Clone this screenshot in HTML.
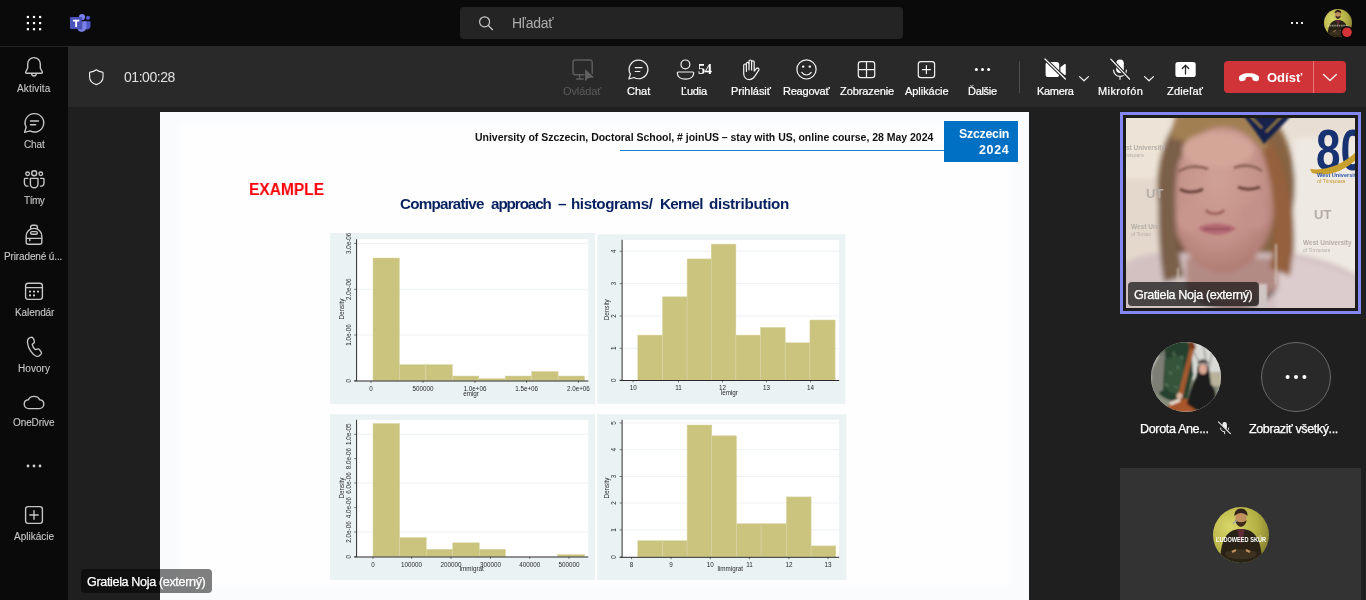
<!DOCTYPE html>
<html lang="sk">
<head>
<meta charset="utf-8">
<title>Microsoft Teams</title>
<style>
*{box-sizing:border-box;margin:0;padding:0}
html,body{width:1366px;height:600px;overflow:hidden;background:#1f1f1f;font-family:"Liberation Sans",sans-serif;}
.abs{position:absolute}
#topbar{left:0;top:0;width:1366px;height:46px;background:#0a0a0a}
#rail{left:0;top:46px;width:68px;height:554px;background:#0a0a0a;border-top:1px solid #222}
#toolbar{left:68px;top:46px;width:1298px;height:61px;background:#292929}
#stage{left:68px;top:107px;width:1298px;height:493px;background:#1f1f1f}
#search{left:460px;top:7px;width:443px;height:32px;background:#242424;border-radius:4px}
.t{position:absolute;white-space:nowrap;line-height:1;transform-origin:0 0;will-change:transform}
.rl{color:#cfcfcf;font-size:10px;text-align:center;width:68px;left:0}
.tl{color:#fff;font-size:11px;text-align:center;width:80px}
#slide{left:160px;top:112px;width:869px;height:488px;background:#f9fbfd;overflow:hidden}
#icons{left:0;top:0;width:1366px;height:600px;pointer-events:none}
</style>
</head>
<body>
<div id="topbar" class="abs"></div>
<div id="rail" class="abs"></div>
<div id="toolbar" class="abs"></div>
<div id="stage" class="abs"></div>
<div id="search" class="abs"></div>
<div class="t" id="s_txt" style="letter-spacing:-0.25px;left:512px;top:16px;font-size:14px;color:#adadad">Hľadať</div>

<!-- labels -->
<div class="t" style="left:562.8px;top:86px;font-size:11px;color:#5c5c5c;letter-spacing:-0.114px">Ovládať</div>
<div class="t" style="left:626.6px;top:86px;font-size:11px;color:#fff;-webkit-text-stroke:0.22px #fff;letter-spacing:0.017px">Chat</div>
<div class="t" style="left:681.3px;top:86px;font-size:11px;color:#fff;-webkit-text-stroke:0.22px #fff;letter-spacing:-0.205px">Ľudia</div>
<div class="t" style="left:730.8px;top:86px;font-size:11px;color:#fff;-webkit-text-stroke:0.22px #fff;letter-spacing:-0.038px">Prihlásiť</div>
<div class="t" style="left:783.2px;top:86px;font-size:11px;color:#fff;-webkit-text-stroke:0.22px #fff;letter-spacing:-0.225px">Reagovať</div>
<div class="t" style="left:839.5px;top:86px;font-size:11px;color:#fff;-webkit-text-stroke:0.22px #fff;letter-spacing:-0.094px">Zobrazenie</div>
<div class="t" style="left:904.8px;top:86px;font-size:11px;color:#fff;-webkit-text-stroke:0.22px #fff;letter-spacing:-0.054px">Aplikácie</div>
<div class="t" style="left:968.3px;top:86px;font-size:11px;color:#fff;-webkit-text-stroke:0.22px #fff;letter-spacing:-0.296px">Ďalšie</div>
<div class="t" style="left:1037.2px;top:86px;font-size:11px;color:#fff;-webkit-text-stroke:0.22px #fff;letter-spacing:-0.326px">Kamera</div>
<div class="t" style="left:1098.1px;top:86px;font-size:11px;color:#fff;-webkit-text-stroke:0.22px #fff;letter-spacing:0.387px">Mikrofón</div>
<div class="t" style="left:1167.3px;top:86px;font-size:11px;color:#fff;-webkit-text-stroke:0.22px #fff;letter-spacing:0.19px">Zdieľať</div>
<div class="t" style="left:17.1px;top:84px;font-size:10px;color:#c8c8c8;-webkit-text-stroke:0.1px #c8c8c8;letter-spacing:0.152px">Aktivita</div>
<div class="t" style="left:23.6px;top:140px;font-size:10px;color:#c8c8c8;-webkit-text-stroke:0.1px #c8c8c8;letter-spacing:-0.108px">Chat</div>
<div class="t" style="left:23.6px;top:196px;font-size:10px;color:#c8c8c8;-webkit-text-stroke:0.1px #c8c8c8;letter-spacing:-0.473px">Tímy</div>
<div class="t" style="left:4.0px;top:252px;font-size:10px;color:#c8c8c8;-webkit-text-stroke:0.1px #c8c8c8;letter-spacing:-0.127px">Priradené ú...</div>
<div class="t" style="left:14.6px;top:308px;font-size:10px;color:#c8c8c8;-webkit-text-stroke:0.1px #c8c8c8;letter-spacing:-0.09px">Kalendár</div>
<div class="t" style="left:18.0px;top:364px;font-size:10px;color:#c8c8c8;-webkit-text-stroke:0.1px #c8c8c8;letter-spacing:0.062px">Hovory</div>
<div class="t" style="left:13.2px;top:418px;font-size:10px;color:#c8c8c8;-webkit-text-stroke:0.1px #c8c8c8;letter-spacing:-0.093px">OneDrive</div>
<div class="t" style="left:14.0px;top:532px;font-size:10px;color:#c8c8c8;-webkit-text-stroke:0.1px #c8c8c8;letter-spacing:-0.004px">Aplikácie</div>

<!-- toolbar -->
<div class="t" id="timer" style="left:124px;top:70px;font-size:14px;color:#e0e0e0;letter-spacing:-0.45px">01:00:28</div>
<div class="t" style="left:698.400px;top:61.900px;font-size:14.400px;letter-spacing:-0.500px;font-weight:bold;color:#fff;font-family:'Liberation Serif',serif">54</div>
<div class="abs" style="left:1019px;top:61px;width:1px;height:32px;background:#4d4d4d"></div>
<div class="abs" id="leave" style="left:1224px;top:61px;width:122px;height:32px;background:#d13438;border-radius:4px"></div>
<div class="abs" style="left:1313px;top:61px;width:1px;height:32px;background:#e6787b"></div>
<div class="t" id="odist" style="left:1266.5px;top:70.6px;font-size:13px;font-weight:bold;color:#fff">Odísť</div>

<!-- slide -->
<div id="slide" class="abs">
<div class="abs" style="left:22px;top:16px;width:825px;height:455px;background:#fefefe;box-shadow:0 0 6px 3px #fefefe"></div>
</div>

<!-- right panel -->
<div class="abs" style="left:620px;top:149.500px;width:324px;height:1.200px;background:#1b7fd0"></div>
<div class="abs" style="left:943.500px;top:120.800px;width:74.500px;height:40.800px;background:#0070c4"></div>
<div class="t" id="hdr" style="letter-spacing:-0.023px;left:475.400px;top:131.600px;font-size:10.500px;font-weight:bold;color:#111">University of Szczecin, Doctoral School, # joinUS – stay with US, online course, 28 May 2024</div>
<div class="t" id="szc" style="letter-spacing:-0.28px;left:959px;top:127.600px;font-size:12.400px;font-weight:bold;color:#fff">Szczecin</div>
<div class="t" id="y24" style="letter-spacing:0.7px;left:979px;top:143.800px;font-size:12.400px;font-weight:bold;color:#fff">2024</div>
<div class="t" id="ex" style="transform:scaleX(0.893);left:249.300px;top:181px;font-size:17.400px;font-weight:bold;color:#fb0007">EXAMPLE</div>
<div class="t" style="left:399.6px;top:195.9px;font-size:15.2px;font-weight:bold;color:#07205f;letter-spacing:-0.752px">Comparative</div>
<div class="t" style="left:491.1px;top:195.9px;font-size:15.2px;font-weight:bold;color:#07205f;letter-spacing:-1.066px">approach</div>
<div class="t" style="left:558.4px;top:195.9px;font-size:15.2px;font-weight:bold;color:#07205f">–</div>
<div class="t" style="left:571.3px;top:195.9px;font-size:15.2px;font-weight:bold;color:#07205f;letter-spacing:-0.419px">histograms/</div>
<div class="t" style="left:659.9px;top:195.9px;font-size:15.2px;font-weight:bold;color:#07205f;letter-spacing:-0.756px">Kernel</div>
<div class="t" style="left:709.4px;top:195.9px;font-size:15.2px;font-weight:bold;color:#07205f;letter-spacing:-0.285px">distribution</div>
<svg class="abs" id="plots" style="left:0;top:0;width:1366px;height:600px" viewBox="0 0 1366 600" font-family="Liberation Sans, sans-serif" font-size="6.3" fill="#2a2a2a">
<g filter="url(#pb)">
<rect x="330" y="233" width="265.2" height="171.2" fill="#eaf2f3"/>
<rect x="356.3" y="239.2" width="232.0" height="141.5" fill="#fff"/>
<path d="M356.3 335H588.3" stroke="#e9eef0" stroke-width="0.8"/>
<path d="M356.3 289.3H588.3" stroke="#e9eef0" stroke-width="0.8"/>
<path d="M356.3 243.4H588.3" stroke="#e9eef0" stroke-width="0.8"/>
<rect x="373.0" y="258.0" width="26.4" height="122.7" fill="#cac47f" stroke="#d9d5a3" stroke-width="0.5"/>
<rect x="399.4" y="364.7" width="26.4" height="16.0" fill="#cac47f" stroke="#d9d5a3" stroke-width="0.5"/>
<rect x="425.9" y="364.7" width="26.5" height="16.0" fill="#cac47f" stroke="#d9d5a3" stroke-width="0.5"/>
<rect x="452.4" y="376.0" width="26.4" height="4.7" fill="#cac47f" stroke="#d9d5a3" stroke-width="0.5"/>
<rect x="478.8" y="378.6" width="26.4" height="2.1" fill="#cac47f" stroke="#d9d5a3" stroke-width="0.5"/>
<rect x="505.2" y="376.0" width="26.5" height="4.7" fill="#cac47f" stroke="#d9d5a3" stroke-width="0.5"/>
<rect x="531.7" y="371.5" width="26.4" height="9.2" fill="#cac47f" stroke="#d9d5a3" stroke-width="0.5"/>
<rect x="558.1" y="376.0" width="26.5" height="4.7" fill="#cac47f" stroke="#d9d5a3" stroke-width="0.5"/>
<path d="M356.6 239.2V381.0M354.3 381.0H588.3" stroke="#2b2b2b" stroke-width="1" fill="none"/>
<path d="M371 380.7v2.2" stroke="#2b2b2b" stroke-width="0.6"/>
<text x="371" y="390.6" text-anchor="middle">0</text>
<path d="M423 380.7v2.2" stroke="#2b2b2b" stroke-width="0.6"/>
<text x="423" y="390.6" text-anchor="middle">500000</text>
<path d="M475 380.7v2.2" stroke="#2b2b2b" stroke-width="0.6"/>
<text x="475" y="390.6" text-anchor="middle">1.0e+06</text>
<path d="M526.6 380.7v2.2" stroke="#2b2b2b" stroke-width="0.6"/>
<text x="526.6" y="390.6" text-anchor="middle">1.5e+06</text>
<path d="M578.4 380.7v2.2" stroke="#2b2b2b" stroke-width="0.6"/>
<text x="578.4" y="390.6" text-anchor="middle">2.0e+06</text>
<text x="471" y="395.6" text-anchor="middle">emigr</text>
<path d="M356.3 380.7h-2.2" stroke="#2b2b2b" stroke-width="0.6"/>
<text transform="translate(350.5,380.7) rotate(-90)" text-anchor="middle">0</text>
<path d="M356.3 335h-2.2" stroke="#2b2b2b" stroke-width="0.6"/>
<text transform="translate(350.5,335) rotate(-90)" text-anchor="middle">1.0e-06</text>
<path d="M356.3 289.3h-2.2" stroke="#2b2b2b" stroke-width="0.6"/>
<text transform="translate(350.5,289.3) rotate(-90)" text-anchor="middle">2.0e-06</text>
<path d="M356.3 243.4h-2.2" stroke="#2b2b2b" stroke-width="0.6"/>
<text transform="translate(350.5,243.4) rotate(-90)" text-anchor="middle">3.0e-06</text>
<text transform="translate(343.5,309) rotate(-90)" text-anchor="middle">Density</text>
<rect x="597.2" y="234.3" width="248.1" height="169.5" fill="#eaf2f3"/>
<rect x="621.8" y="239.8" width="217.4" height="140.4" fill="#fff"/>
<path d="M621.8 348.3H839.2" stroke="#e9eef0" stroke-width="0.8"/>
<path d="M621.8 316H839.2" stroke="#e9eef0" stroke-width="0.8"/>
<path d="M621.8 283.6H839.2" stroke="#e9eef0" stroke-width="0.8"/>
<path d="M621.8 251.2H839.2" stroke="#e9eef0" stroke-width="0.8"/>
<rect x="637.8" y="335.1" width="24.7" height="45.1" fill="#cac47f" stroke="#d9d5a3" stroke-width="0.5"/>
<rect x="662.5" y="296.8" width="24.6" height="83.4" fill="#cac47f" stroke="#d9d5a3" stroke-width="0.5"/>
<rect x="687.1" y="258.9" width="24.1" height="121.3" fill="#cac47f" stroke="#d9d5a3" stroke-width="0.5"/>
<rect x="711.2" y="244.1" width="24.7" height="136.1" fill="#cac47f" stroke="#d9d5a3" stroke-width="0.5"/>
<rect x="735.9" y="335.1" width="24.6" height="45.1" fill="#cac47f" stroke="#d9d5a3" stroke-width="0.5"/>
<rect x="760.5" y="327.4" width="24.7" height="52.8" fill="#cac47f" stroke="#d9d5a3" stroke-width="0.5"/>
<rect x="785.2" y="342.8" width="24.7" height="37.4" fill="#cac47f" stroke="#d9d5a3" stroke-width="0.5"/>
<rect x="809.9" y="320.0" width="25.2" height="60.2" fill="#cac47f" stroke="#d9d5a3" stroke-width="0.5"/>
<path d="M622.0999999999999 239.8V380.5M619.8 380.5H839.2" stroke="#2b2b2b" stroke-width="1" fill="none"/>
<path d="M633.2 380.2v2.2" stroke="#2b2b2b" stroke-width="0.6"/>
<text x="633.2" y="390.1" text-anchor="middle">10</text>
<path d="M678.5 380.2v2.2" stroke="#2b2b2b" stroke-width="0.6"/>
<text x="678.5" y="390.1" text-anchor="middle">11</text>
<path d="M722.6 380.2v2.2" stroke="#2b2b2b" stroke-width="0.6"/>
<text x="722.6" y="390.1" text-anchor="middle">12</text>
<path d="M766.4 380.2v2.2" stroke="#2b2b2b" stroke-width="0.6"/>
<text x="766.4" y="390.1" text-anchor="middle">13</text>
<path d="M810.5 380.2v2.2" stroke="#2b2b2b" stroke-width="0.6"/>
<text x="810.5" y="390.1" text-anchor="middle">14</text>
<text x="729.4" y="395" text-anchor="middle">lemigr</text>
<path d="M621.8 380.2h-2.2" stroke="#2b2b2b" stroke-width="0.6"/>
<text transform="translate(616,380.2) rotate(-90)" text-anchor="middle">0</text>
<path d="M621.8 348.3h-2.2" stroke="#2b2b2b" stroke-width="0.6"/>
<text transform="translate(616,348.3) rotate(-90)" text-anchor="middle">1</text>
<path d="M621.8 316h-2.2" stroke="#2b2b2b" stroke-width="0.6"/>
<text transform="translate(616,316) rotate(-90)" text-anchor="middle">2</text>
<path d="M621.8 283.6h-2.2" stroke="#2b2b2b" stroke-width="0.6"/>
<text transform="translate(616,283.6) rotate(-90)" text-anchor="middle">3</text>
<path d="M621.8 251.2h-2.2" stroke="#2b2b2b" stroke-width="0.6"/>
<text transform="translate(616,251.2) rotate(-90)" text-anchor="middle">4</text>
<text transform="translate(609,309.8) rotate(-90)" text-anchor="middle">Density</text>
<rect x="330" y="414.3" width="265.2" height="165.8" fill="#eaf2f3"/>
<rect x="356.3" y="419.8" width="232.0" height="136.9" fill="#fff"/>
<path d="M356.3 434.3H588.3" stroke="#e9eef0" stroke-width="0.8"/>
<path d="M356.3 483H588.3" stroke="#e9eef0" stroke-width="0.8"/>
<path d="M356.3 532H588.3" stroke="#e9eef0" stroke-width="0.8"/>
<rect x="373.0" y="423.5" width="26.7" height="133.2" fill="#cac47f" stroke="#d9d5a3" stroke-width="0.5"/>
<rect x="399.7" y="537.6" width="26.6" height="19.1" fill="#cac47f" stroke="#d9d5a3" stroke-width="0.5"/>
<rect x="426.3" y="549.3" width="26.5" height="7.4" fill="#cac47f" stroke="#d9d5a3" stroke-width="0.5"/>
<rect x="452.8" y="542.8" width="26.5" height="13.9" fill="#cac47f" stroke="#d9d5a3" stroke-width="0.5"/>
<rect x="479.3" y="549.3" width="26.2" height="7.4" fill="#cac47f" stroke="#d9d5a3" stroke-width="0.5"/>
<rect x="557.4" y="554.6" width="27.2" height="2.1" fill="#cac47f" stroke="#d9d5a3" stroke-width="0.5"/>
<path d="M356.6 419.8V557.0M354.3 557.0H588.3" stroke="#2b2b2b" stroke-width="1" fill="none"/>
<path d="M373 556.7v2.2" stroke="#2b2b2b" stroke-width="0.6"/>
<text x="373" y="566.6" text-anchor="middle">0</text>
<path d="M411.6 556.7v2.2" stroke="#2b2b2b" stroke-width="0.6"/>
<text x="411.6" y="566.6" text-anchor="middle">100000</text>
<path d="M451 556.7v2.2" stroke="#2b2b2b" stroke-width="0.6"/>
<text x="451" y="566.6" text-anchor="middle">200000</text>
<path d="M490.5 556.7v2.2" stroke="#2b2b2b" stroke-width="0.6"/>
<text x="490.5" y="566.6" text-anchor="middle">300000</text>
<path d="M529.7 556.7v2.2" stroke="#2b2b2b" stroke-width="0.6"/>
<text x="529.7" y="566.6" text-anchor="middle">400000</text>
<path d="M569 556.7v2.2" stroke="#2b2b2b" stroke-width="0.6"/>
<text x="569" y="566.6" text-anchor="middle">500000</text>
<text x="471.7" y="571.4" text-anchor="middle">immigrat</text>
<path d="M356.3 556.7h-2.2" stroke="#2b2b2b" stroke-width="0.6"/>
<text transform="translate(350.5,556.7) rotate(-90)" text-anchor="middle">0</text>
<path d="M356.3 532h-2.2" stroke="#2b2b2b" stroke-width="0.6"/>
<text transform="translate(350.5,532) rotate(-90)" text-anchor="middle">2.0e-06</text>
<path d="M356.3 507.6h-2.2" stroke="#2b2b2b" stroke-width="0.6"/>
<text transform="translate(350.5,507.6) rotate(-90)" text-anchor="middle">4.0e-06</text>
<path d="M356.3 483h-2.2" stroke="#2b2b2b" stroke-width="0.6"/>
<text transform="translate(350.5,483) rotate(-90)" text-anchor="middle">6.0e-06</text>
<path d="M356.3 458.6h-2.2" stroke="#2b2b2b" stroke-width="0.6"/>
<text transform="translate(350.5,458.6) rotate(-90)" text-anchor="middle">8.0e-06</text>
<path d="M356.3 434.3h-2.2" stroke="#2b2b2b" stroke-width="0.6"/>
<text transform="translate(350.5,434.3) rotate(-90)" text-anchor="middle">1.0e-05</text>
<text transform="translate(343.5,488) rotate(-90)" text-anchor="middle">Density</text>
<rect x="597.2" y="414.3" width="249.4" height="165.8" fill="#eaf2f3"/>
<rect x="621.8" y="419.8" width="217.4" height="137.2" fill="#fff"/>
<path d="M621.8 529.9H839.2" stroke="#e9eef0" stroke-width="0.8"/>
<path d="M621.8 503H839.2" stroke="#e9eef0" stroke-width="0.8"/>
<path d="M621.8 476.5H839.2" stroke="#e9eef0" stroke-width="0.8"/>
<path d="M621.8 449.7H839.2" stroke="#e9eef0" stroke-width="0.8"/>
<path d="M621.8 422.9H839.2" stroke="#e9eef0" stroke-width="0.8"/>
<rect x="637.8" y="540.7" width="24.7" height="16.3" fill="#cac47f" stroke="#d9d5a3" stroke-width="0.5"/>
<rect x="662.5" y="540.7" width="24.6" height="16.3" fill="#cac47f" stroke="#d9d5a3" stroke-width="0.5"/>
<rect x="687.1" y="425.0" width="24.7" height="132.0" fill="#cac47f" stroke="#d9d5a3" stroke-width="0.5"/>
<rect x="711.8" y="435.8" width="24.7" height="121.2" fill="#cac47f" stroke="#d9d5a3" stroke-width="0.5"/>
<rect x="736.5" y="523.7" width="24.6" height="33.3" fill="#cac47f" stroke="#d9d5a3" stroke-width="0.5"/>
<rect x="761.1" y="523.7" width="25.3" height="33.3" fill="#cac47f" stroke="#d9d5a3" stroke-width="0.5"/>
<rect x="786.4" y="496.9" width="24.7" height="60.1" fill="#cac47f" stroke="#d9d5a3" stroke-width="0.5"/>
<rect x="811.1" y="545.9" width="24.7" height="11.1" fill="#cac47f" stroke="#d9d5a3" stroke-width="0.5"/>
<path d="M622.0999999999999 419.8V557.3M619.8 557.3H839.2" stroke="#2b2b2b" stroke-width="1" fill="none"/>
<path d="M631.6 557v2.2" stroke="#2b2b2b" stroke-width="0.6"/>
<text x="631.6" y="566.9" text-anchor="middle">8</text>
<path d="M671.1 557v2.2" stroke="#2b2b2b" stroke-width="0.6"/>
<text x="671.1" y="566.9" text-anchor="middle">9</text>
<path d="M710.3 557v2.2" stroke="#2b2b2b" stroke-width="0.6"/>
<text x="710.3" y="566.9" text-anchor="middle">10</text>
<path d="M749.4 557v2.2" stroke="#2b2b2b" stroke-width="0.6"/>
<text x="749.4" y="566.9" text-anchor="middle">11</text>
<path d="M788.9 557v2.2" stroke="#2b2b2b" stroke-width="0.6"/>
<text x="788.9" y="566.9" text-anchor="middle">12</text>
<path d="M828 557v2.2" stroke="#2b2b2b" stroke-width="0.6"/>
<text x="828" y="566.9" text-anchor="middle">13</text>
<text x="730.3" y="571.4" text-anchor="middle">limmigrat</text>
<path d="M621.8 557h-2.2" stroke="#2b2b2b" stroke-width="0.6"/>
<text transform="translate(616,557) rotate(-90)" text-anchor="middle">0</text>
<path d="M621.8 529.9h-2.2" stroke="#2b2b2b" stroke-width="0.6"/>
<text transform="translate(616,529.9) rotate(-90)" text-anchor="middle">1</text>
<path d="M621.8 503h-2.2" stroke="#2b2b2b" stroke-width="0.6"/>
<text transform="translate(616,503) rotate(-90)" text-anchor="middle">2</text>
<path d="M621.8 476.5h-2.2" stroke="#2b2b2b" stroke-width="0.6"/>
<text transform="translate(616,476.5) rotate(-90)" text-anchor="middle">3</text>
<path d="M621.8 449.7h-2.2" stroke="#2b2b2b" stroke-width="0.6"/>
<text transform="translate(616,449.7) rotate(-90)" text-anchor="middle">4</text>
<path d="M621.8 422.9h-2.2" stroke="#2b2b2b" stroke-width="0.6"/>
<text transform="translate(616,422.9) rotate(-90)" text-anchor="middle">5</text>
<text transform="translate(609,488) rotate(-90)" text-anchor="middle">Density</text>
</g>
<defs><filter id="pb" x="0" y="0" width="100%" height="100%"><feGaussianBlur stdDeviation="0.35"/></filter></defs>
</svg>
<!-- video tile -->
<div class="abs" style="left:1120px;top:112px;width:241px;height:202px;background:#1c1c1c;border:3px solid #8287f4"></div>
<svg class="abs" style="left:1126px;top:118px;width:229px;height:190px" viewBox="0 0 229 190">
<defs>
<filter id="vb" x="-10%" y="-10%" width="120%" height="120%"><feGaussianBlur stdDeviation="2.600"/></filter>
<filter id="vb2" x="-10%" y="-10%" width="120%" height="120%"><feGaussianBlur stdDeviation="1.100"/></filter>
<filter id="vb3" x="-20%" y="-20%" width="140%" height="140%"><feGaussianBlur stdDeviation="0.600"/></filter>
<clipPath id="vc"><rect width="229" height="190"/></clipPath>
<radialGradient id="fg" cx="0.45" cy="0.35" r="0.75"><stop offset="0" stop-color="#d0a196"/><stop offset="0.600" stop-color="#c29088"/><stop offset="1" stop-color="#a67268"/></radialGradient>
</defs>
<g clip-path="url(#vc)">
<rect width="229" height="190" fill="#e8ded3"/>
<g filter="url(#vb)">
<rect x="168" y="20" width="70" height="150" fill="#efe9e3"/>
<rect x="-5" y="-5" width="48" height="70" fill="#ede4d7"/>
<rect x="-5" y="60" width="40" height="90" fill="#e4d8cc"/>
<!-- ribbon -->
<!-- hair back -->
<ellipse cx="100" cy="68" rx="69" ry="94" fill="#866443"/>
<path d="M50 -4c30-6 70-4 84 8l10 30H40z" fill="#a27f52"/>
<path d="M44 20c-10 30-12 80-2 138l20-4c-8-40-10-90-2-130z" fill="#6f5039"/>
<path d="M150 30c16 30 22 80 16 128l-22-4c6-40 4-86-6-120z" fill="#7f5e3e"/>
<!-- clothes -->
<path d="M-5 195v-46c10-10 26-14 46-14h110c30 0 56 8 84 24v36z" fill="#d3c1c2"/>
<path d="M150 140c30 0 56 8 84 24v30h-84z" fill="#dccccd"/>
<path d="M60 140h92v30c-10 14-30 22-46 22s-36-8-46-22z" fill="#b38b85"/><path d="M64 172c10 12 26 18 42 18s32-6 42-18" stroke="#7f6c6b" stroke-width="5" fill="none"/>
<!-- face -->
<ellipse cx="97" cy="82" rx="52" ry="73" fill="url(#fg)"/>
<ellipse cx="92" cy="32" rx="36" ry="18" fill="#d3a698"/>
<ellipse cx="66" cy="100" rx="15" ry="14" fill="#c9968d"/>
<ellipse cx="128" cy="98" rx="14" ry="14" fill="#c4908a"/>
<!-- hair front sides -->
<path d="M44 18c-12 30-16 90-6 146l20-6c-10-40-12-90-2-132z" fill="#7a5e48"/>
<path d="M146 24c18 30 26 86 18 134l-20-8c8-40 4-84-8-116z" fill="#94603c"/>
</g>
<g filter="url(#vb2)">
<path d="M52 54c8-6 20-7 30-3M108 50c8-4 20-3 28 3" stroke="#8c6354" stroke-width="2.600" fill="none"/>
<path d="M54 71c6 4 16 4 23 0M112 69c6 3 15 3 22 0" stroke="#6d443c" stroke-width="2.800" fill="none"/>
<path d="M80 92c4 5 14 5 18 0" stroke="#a2695f" stroke-width="3.200" fill="none"/>
<path d="M72 110c8-6 28-6 38 0-8 9-30 9-38 0z" fill="#b56c74"/>
<path d="M78 111h26" stroke="#8a4a52" stroke-width="1.600"/>
<path d="M52 150v26M150 126v40" stroke="#cfc4b6" stroke-width="1.600"/>
<path d="M117 -3h49l-28 29-9-13z" fill="#15244c"/><path d="M124 -2l12 12M156 -2l-16 16" stroke="#b9962f" stroke-width="1.300"/>
<rect x="132" y="166" width="9" height="24" fill="#cfc6c4"/>
</g>
<!-- 80 logo -->
<g filter="url(#vb3)">
<text x="190" y="51.500" font-family="Liberation Sans, sans-serif" font-weight="bold" font-size="58" fill="#17306f" textLength="49" lengthAdjust="spacingAndGlyphs">80</text>
<path d="M184 51c16 2 32-4 46-17v8c-14 12-28 17-44 13z" fill="#c7a02e"/>
<text x="191" y="59" font-family="Liberation Sans, sans-serif" font-weight="bold" font-size="5.600" fill="#2a56a8">West University</text>
<text x="191" y="64.500" font-family="Liberation Sans, sans-serif" font-size="5.200" fill="#c39a2c">of Timișoara</text>
<g fill="#b5aea7" font-family="Liberation Sans, sans-serif" font-weight="bold">
<text x="0" y="32" font-size="6.500">st University</text><text x="0" y="39" font-size="5" font-weight="normal">mișoara</text>
<text x="20" y="80" font-size="13">UT</text>
<text x="5" y="111" font-size="6.500">West Uni</text><text x="5" y="118" font-size="5" font-weight="normal">of Timișo</text>
<text x="188" y="101" font-size="13">UT</text>
<text x="177" y="127" font-size="6.500">West University</text><text x="177" y="134" font-size="5" font-weight="normal">of Timișoara</text>
</g>
</g>
</g>
</svg>
<div class="abs" style="left:1128px;top:282px;width:131px;height:24px;background:rgba(20,20,20,0.720);border-radius:4px"></div>
<div class="t" id="vname" style="-webkit-text-stroke:0.25px #fff;left:1133.500px;top:289px;font-size:12.600px;color:#fff;letter-spacing:-0.360px">Gratiela Noja (externý)</div>

<!-- Dorota avatar -->
<svg class="abs" style="left:1151px;top:342px;width:70px;height:70px" viewBox="0 0 70 70">
<defs><clipPath id="dc"><circle cx="35" cy="35" r="35"/></clipPath><filter id="db" x="-10%" y="-10%" width="120%" height="120%"><feGaussianBlur stdDeviation="1.300"/></filter></defs>
<g clip-path="url(#dc)">
<rect width="70" height="70" fill="#cfcfca"/>
<g filter="url(#db)">
<rect x="0" y="38" width="70" height="32" fill="#868c78"/><rect x="56" y="30" width="14" height="14" fill="#b9b39c"/>
<rect x="40" y="0" width="30" height="30" fill="#d9d9d6"/>
<path d="M40 4l10 20M52 0l4 26M62 6l-4 20" stroke="#9a9a94" stroke-width="1.500"/>
<path d="M8 8c6-10 26-12 32-6l2 30-6 26c-10 4-22 0-28-6z" fill="#27402d"/>
<path d="M14 20c4-6 14-8 18-4l2 20-6 16c-6 0-12-2-14-8z" fill="#35543b"/><path d="M12 14l3 3M22 10l2 4M18 30l3 2M26 24l2 3M14 42l3 2M24 44l2 2M30 14l2 3" stroke="#5d7d5f" stroke-width="1.600"/>
<path d="M0 30c4-10 8-18 14-22l-2 40-10 6z" fill="#7d7f74"/>
<!-- instrument -->
<path d="M40 2l4 2-12 50-5-1z" fill="#a55a2e"/>
<path d="M38 0c4-2 8 2 6 8l-6-2z" fill="#7a3a1c"/>
<path d="M16 66c4-8 14-12 24-8l6 12H16z" fill="#a8542b"/>
<path d="M19 62l10-4" stroke="#e8dccf" stroke-width="3"/>
<!-- person -->
<path d="M46 26c2-6 10-6 12 0l2 16c4 4 6 10 4 18l-16 10-12-8c2-12 6-22 10-28z" fill="#1f1f1f"/>
<ellipse cx="52" cy="27" rx="4.200" ry="5.200" fill="#dba794"/>
<path d="M46 22c2-6 10-6 12 0-4-2-8-2-12 0z" fill="#2a1d18"/>
<circle cx="28.500" cy="54" r="3" fill="#e2b8a2"/>
</g>
</g>
</svg>
<div class="t" id="dname" style="-webkit-text-stroke:0.25px #fff;left:1139.500px;top:423.100px;font-size:12.600px;color:#fff;letter-spacing:-0.380px">Dorota Ane...</div>
<div class="t" id="zname" style="-webkit-text-stroke:0.25px #fff;left:1249px;top:423.100px;font-size:12.600px;color:#fff;letter-spacing:-0.420px">Zobraziť všetký...</div>
<div class="abs" style="left:1261px;top:342px;width:70px;height:70px;border-radius:50%;background:#292929;border:1px solid #6a6a6a"></div>

<!-- bottom-right tile -->
<div class="abs" style="left:1120px;top:468px;width:241px;height:132px;background:#333333"></div>
<svg class="abs" style="left:1213px;top:507px;width:56px;height:56px" viewBox="0 0 56 56">
<defs><clipPath id="lc"><circle cx="28" cy="28" r="28"/></clipPath><filter id="lb" x="-10%" y="-10%" width="120%" height="120%"><feGaussianBlur stdDeviation="0.700"/></filter>
<radialGradient id="lg" cx="0.300" cy="0.350" r="0.900"><stop offset="0" stop-color="#d8d66a"/><stop offset="0.550" stop-color="#b5b044"/><stop offset="1" stop-color="#6f6a28"/></radialGradient>
<g id="lud"><rect width="56" height="56" fill="url(#lg)"/>
<g filter="url(#lb)">
<path d="M7 58c0-20 4-36 21-36s21 16 21 36z" fill="#2a2418"/>
<path d="M24 22l4 16 4-16z" fill="#5e2c36"/>
<ellipse cx="28" cy="11" rx="5.600" ry="7.500" fill="#c2905e"/>
<path d="M21.500 9c-1-10 14-10 13 0-4-4-9-4-13 0z" fill="#33241a"/>
<path d="M22.400 13c1 9 10 9 11.200 0-3 3-8 3-11.200 0z" fill="#3c2a1c"/>
<path d="M24 13.500l-4 3" stroke="#9aa0a8" stroke-width="1.400"/>
<path d="M12 46c8-5 24-5 32 0l-2 4c-8 3-20 3-28 0z" fill="#3d3322"/>
<path d="M19 45l4-2M37 45l-4-2" stroke="#c2905e" stroke-width="2"/>
</g></g></defs>
<g clip-path="url(#lc)"><use href="#lud"/>
<text x="28" y="34.500" text-anchor="middle" font-family="Liberation Sans, sans-serif" font-weight="bold" font-size="6.400" fill="#fff" textLength="50" lengthAdjust="spacingAndGlyphs">ĽUDOWEED SKÚR</text>
</g>
</svg>
<!-- top-right avatar -->
<svg class="abs" style="left:1324px;top:8.700px;width:30px;height:30px" viewBox="0 0 60 60">
<defs><clipPath id="lc2"><circle cx="28" cy="28" r="28"/></clipPath></defs>
<g clip-path="url(#lc2)"><use href="#lud"/><path d="M7 33h42" stroke="#e8e8e0" stroke-width="3.500" stroke-dasharray="3 1.500" opacity="0.550"/></g>
<circle cx="46" cy="46.500" r="12.500" fill="#0a0a0a"/><circle cx="46" cy="46.500" r="9.600" fill="#d33438"/>
</svg>

<!-- bottom-left name label -->
<div class="abs" style="left:81px;top:569px;width:131px;height:24px;background:rgba(0,0,0,0.500);border-radius:4px"></div>
<div class="t" id="bname" style="-webkit-text-stroke:0.25px #fff;left:86.800px;top:576.200px;font-size:12.600px;color:#fff;letter-spacing:-0.360px">Gratiela Noja (externý)</div>


<svg id="icons" class="abs" viewBox="0 0 1366 600">
<!-- waffle -->
<g fill="#fff">
<rect x="26.8" y="15.9" width="2.2" height="2.2"/><rect x="32.9" y="15.9" width="2.2" height="2.2"/><rect x="39" y="15.9" width="2.2" height="2.2"/>
<rect x="26.8" y="22" width="2.2" height="2.2"/><rect x="32.9" y="22" width="2.2" height="2.2"/><rect x="39" y="22" width="2.2" height="2.2"/>
<rect x="26.8" y="28.1" width="2.2" height="2.2"/><rect x="32.9" y="28.1" width="2.2" height="2.2"/><rect x="39" y="28.1" width="2.2" height="2.2"/>
</g>
<!-- teams logo -->
<g>
<circle cx="88" cy="17.800" r="2.100" fill="#5059c9"/>
<path d="M84.800 21.200h4.800c.5 0 .9.400.9.900v4c0 1.900-1.500 3.400-3.300 3.400s-3.300-1.500-3.300-3.400z" fill="#5059c9"/>
<circle cx="82" cy="17" r="3.100" fill="#7b83eb"/>
<path d="M77 21.200h8.500c.5 0 .9.400.9.900v5.200c0 2.500-2.100 4.500-4.700 4.500s-4.700-2-4.700-4.500z" fill="#7b83eb"/>
<rect x="70.400" y="17.400" width="12" height="12.200" rx="1.100" fill="#0a0a0a" opacity="0.350"/>
<rect x="70" y="17" width="11.800" height="12" rx="1.100" fill="#4b53bc"/>
<path d="M73 19.800h6.300v1.700h-2.200v5.600h-1.900v-5.600H73z" fill="#fff"/>
</g>
<!-- search -->
<g fill="none" stroke="#c8c8c8" stroke-width="1.2" stroke-linecap="round">
<circle cx="484.6" cy="21.800" r="5"/><path d="M488.300 25.500l4.300 4.200"/>
</g>
<!-- top right dots -->
<g fill="#e8e8e8"><rect x="1291" y="22" width="2" height="2"/><rect x="1296" y="22" width="2" height="2"/><rect x="1301" y="22" width="2" height="2"/></g>

<!-- RAIL ICONS -->
<g fill="none" stroke="#c6c6c6" stroke-width="1.380" stroke-linecap="round" stroke-linejoin="round">
<!-- bell -->
<path d="M34 57.600c-3.700 0-6.300 2.800-6.300 6.300v4.100l-2 4c-.3.600.1 1.300.8 1.300h15c.7 0 1.100-.7.800-1.300l-2-4v-4.100c0-3.500-2.600-6.300-6.300-6.300z"/>
<path d="M31.600 73.600a2.400 2.400 0 0 0 4.800 0"/>
<!-- chat -->
<path d="M34.500 113.600a9.200 9.200 0 1 1-4.500 17.200l-5.400 1.500 1.600-5.100A9.200 9.200 0 0 1 34.500 113.600z"/>
<path d="M30.500 121h8M30.500 124.800h5.200"/>
<!-- teams -->
<circle cx="34.200" cy="173.300" r="2.500"/><circle cx="27.600" cy="173.800" r="1.800"/><circle cx="40.800" cy="173.800" r="1.800"/>
<path d="M30.400 178.400h7.600v5.600a3.800 3.800 0 0 1-7.600 0z"/>
<path d="M27.800 178.400h-2.600c-.5 0-.8.300-.8.800v3.800c0 2 1.700 3.400 3.600 3.100"/>
<path d="M40.600 178.400h2.600c.5 0 .8.300.8.800v3.800c0 2-1.700 3.400-3.600 3.100"/>
<!-- backpack -->
<path d="M30.600 228.600v-1.200c0-1.200 1-2.100 2.100-2.100h2.600c1.200 0 2.100.9 2.100 2.100v1.200"/>
<path d="M26.200 236.200c0-4.400 3.200-7.800 7.800-7.800s7.800 3.400 7.800 7.800v6c0 1.100-.9 2-2 2h-11.600c-1.100 0-2-.9-2-2z"/>
<rect x="30.600" y="231.600" width="6.800" height="2.600" rx="1.300"/>
<path d="M26.400 238.400h15.200M29.800 238.600v2.200"/>
<!-- calendar -->
<rect x="25.600" y="283.200" width="16.800" height="16.200" rx="2.600"/>
<path d="M25.800 287.600h16.400"/>
<!-- phone -->
<path transform="translate(34 337) scale(0.97 0.93) translate(-34 -337)" d="M29.300 337.900l1.600-.5c1-.3 2 .2 2.400 1.200l1 2.500c.4.900.1 1.900-.600 2.500l-1.500 1.300c.2 1.600 1.700 4.300 3.300 5.700l1.800-.6c.9-.3 1.900 0 2.500.8l1.500 2.100c.6.900.5 2-.2 2.800l-1 1c-1 1-2.500 1.400-3.800 1-3.600-1.200-8.100-8.200-8.800-13.200-.5-2.900.3-5.700 1.800-6.600z"/>
<!-- cloud -->
<path d="M29 408.600c-2.800 0-4.800-2-4.800-4.400 0-2.300 1.800-4.200 4.200-4.400.7-2.100 2.900-3.400 5.600-3.400s4.900 1.300 5.600 3.400c2.400.2 4.200 2.100 4.200 4.400 0 2.400-2 4.400-4.800 4.400z"/>
<!-- apps -->
<rect x="25.600" y="506.600" width="16.800" height="16.800" rx="2.600"/>
<path d="M34 510.800v8.400M29.800 515h8.400"/>
</g>
<g fill="#cfcfcf">
<circle cx="30" cy="291.600" r="1.100"/><circle cx="34" cy="291.600" r="1.100"/><circle cx="38" cy="291.600" r="1.100"/>
<circle cx="30" cy="295.400" r="1.100"/><circle cx="34" cy="295.400" r="1.100"/>
<circle cx="28" cy="466" r="1.400"/><circle cx="34" cy="466" r="1.400"/><circle cx="40" cy="466" r="1.400"/>
</g>
<!-- shield -->
<path transform="translate(96.2 77) scale(0.93 0.97) translate(-96.2 -77)" d="M96.300 69.600c1.900 1.400 4.200 2.200 6.500 2.400.4 0 .7.300.7.700v4.500c0 3.600-2.500 6.100-7.200 7.700-4.700-1.600-7.200-4.100-7.200-7.700v-4.500c0-.4.300-.7.700-.700 2.300-.2 4.600-1 6.500-2.400z" fill="none" stroke="#f0f0f0" stroke-width="1.200" stroke-linejoin="round"/>

<!-- Ovladat (disabled) -->
<g fill="none" stroke="#5c5c5c" stroke-width="1.500" stroke-linecap="round" stroke-linejoin="round">
<path d="M584 74.800h-8.600a2.400 2.400 0 0 1-2.400-2.400v-10a2.400 2.400 0 0 1 2.400-2.400h14.400a2.400 2.400 0 0 1 2.400 2.400v11.200"/>
<path d="M579.600 75.200v3.600M576.600 79h6.600"/>
</g>
<path d="M585.100 69.200v12.100l3.300-3.300 5.700-.600z" fill="#616161"/>

<g fill="none" stroke="#f0f0f0" stroke-width="1.220" stroke-linecap="round" stroke-linejoin="round">
<!-- chat -->
<path d="M638.500 60.100a9.300 9.300 0 1 1-4.500 17.400l-5.100 1.500 1.500-4.900A9.300 9.300 0 0 1 638.500 60.100z"/>
<path d="M635.200 67.600h6.800M635.200 71.500h4.600"/>
<!-- people -->
<circle cx="685.400" cy="64.400" r="4.400"/>
<path d="M678.200 72h14.600c.5 0 .9.400.9.900 0 3.700-3.400 6.200-8.200 6.200s-8.200-2.500-8.200-6.200c0-.5.400-.9.900-.9z"/>
<!-- hand -->
<path d="M746.400 71.500v-7.800c0-.8.600-1.400 1.300-1.400s1.300.6 1.300 1.400v-2.300c0-.8.600-1.400 1.300-1.400s1.300.6 1.300 1.400v.9c0-.8.600-1.400 1.300-1.400s1.300.6 1.300 1.400v8.800l2.100-2.400c.6-.7 1.600-.8 2.300-.3.500.4.600 1.100.2 1.700l-4.100 6.300c-1.200 1.900-2.600 3.200-5.200 3.200-3.400 0-5.800-2.500-5.800-6.100v-8.100c0-.8.600-1.400 1.300-1.400s1.400.6 1.400 1.400"/>
<path d="M749 63.700v6.200M751.600 62.300v7.600"/>
<!-- smiley -->
<circle cx="806.500" cy="69.400" r="9.600"/>
<path d="M801.800 72.400c1.100 1.700 2.700 2.600 4.700 2.600s3.600-.9 4.700-2.600"/>
<!-- grid -->
<rect x="858.300" y="61.700" width="16.400" height="15.900" rx="2.600"/>
<path d="M866.500 62v15.400M858.600 69.600h15.800"/>
<!-- apps -->
<rect x="918.300" y="61.700" width="16.300" height="15.900" rx="2.600"/>
<path d="M926.400 65.600v8M922.400 69.600h8"/>
<!-- chevrons -->
<path d="M1079.500 76.600l4.500 4.200 4.500-4.200M1144.500 76.600l4.500 4.200 4.500-4.200"/>
<path d="M1323.600 74.600l6.400 6 6.400-6" stroke-width="1.400"/>
<!-- mic arc+stem -->
<path d="M1113.600 70.200c0 3.600 2.800 6.100 6.400 6.100s6.400-2.500 6.400-6.100M1120 76.500v2.800" stroke-width="1.200"/>
</g>
<g fill="#fff">
<circle cx="803.200" cy="66.600" r="1.200"/><circle cx="809.800" cy="66.600" r="1.200"/>
<circle cx="976.400" cy="69.500" r="1.500"/><circle cx="982.500" cy="69.500" r="1.500"/><circle cx="988.600" cy="69.500" r="1.500"/>
<!-- camera -->
<rect x="1045.600" y="62" width="13.600" height="15" rx="2.600"/>
<path d="M1060.400 67.200l4.200-3.100c.5-.4 1.200 0 1.200.6v9.600c0 .6-.7 1-1.200.6l-4.200-3.100z"/>
<!-- mic body -->
<rect x="1116.200" y="59.400" width="7.600" height="13.600" rx="3.800"/>
<!-- share -->
<rect x="1175.400" y="62" width="20.300" height="15" rx="2.600"/>
<!-- hangup -->
<path d="M1249 72.900c-3.900 0-7.200 1.100-9.200 2.900-1 .9-1 2.300-.6 3.600l.2.700c.3.800 1.100 1.300 2 1.100l2.700-.5c.8-.2 1.400-.8 1.500-1.600l.2-1.700c1-.4 2.100-.6 3.200-.6s2.200.2 3.200.6l.2 1.700c.1.800.7 1.400 1.500 1.600l2.700.5c.9.200 1.700-.3 2-1.100l.2-.7c.4-1.300.4-2.700-.6-3.600-2-1.800-5.300-2.900-9.200-2.900z"/>
</g>
<!-- slashes with dark outline -->
<g stroke-linecap="round" fill="none">
<path d="M1045.800 59.800l19.600 19.200" stroke="#292929" stroke-width="3.400"/>
<path d="M1045 59l20.400 20" stroke="#fff" stroke-width="1.200"/>
<path d="M1111.600 60l18 19.200" stroke="#292929" stroke-width="3.400"/>
<path d="M1110.800 59.200l18.800 20" stroke="#fff" stroke-width="1.200"/>
<!-- share arrow -->
<path d="M1185.500 74v-8.600M1182.300 68.500l3.200-3.200 3.200 3.200" stroke="#292929" stroke-width="1.300" stroke-linejoin="round"/>
</g>
<!-- show-all dots -->
<g fill="#fff"><circle cx="1287.600" cy="377" r="2"/><circle cx="1296" cy="377" r="2"/><circle cx="1304.400" cy="377" r="2"/></g>
<!-- muted mic small -->
<g fill="none" stroke="#e6e6e6" stroke-width="1" stroke-linecap="round">
<rect x="1222.400" y="422.100" width="4.500" height="7.700" rx="2.250" fill="#ececec" stroke="none"/>
<path d="M1220.500 428c0 2.300 1.800 3.700 4.100 3.700s4.100-1.400 4.100-3.700M1224.600 431.900v1.900"/>
<path d="M1218 422.800l11.600 11.600" stroke="#1f1f1f" stroke-width="2.200"/>
<path d="M1218.400 421.900l12 11.800" stroke-width="1.100"/>
</g>



</svg>
</body>
</html>
